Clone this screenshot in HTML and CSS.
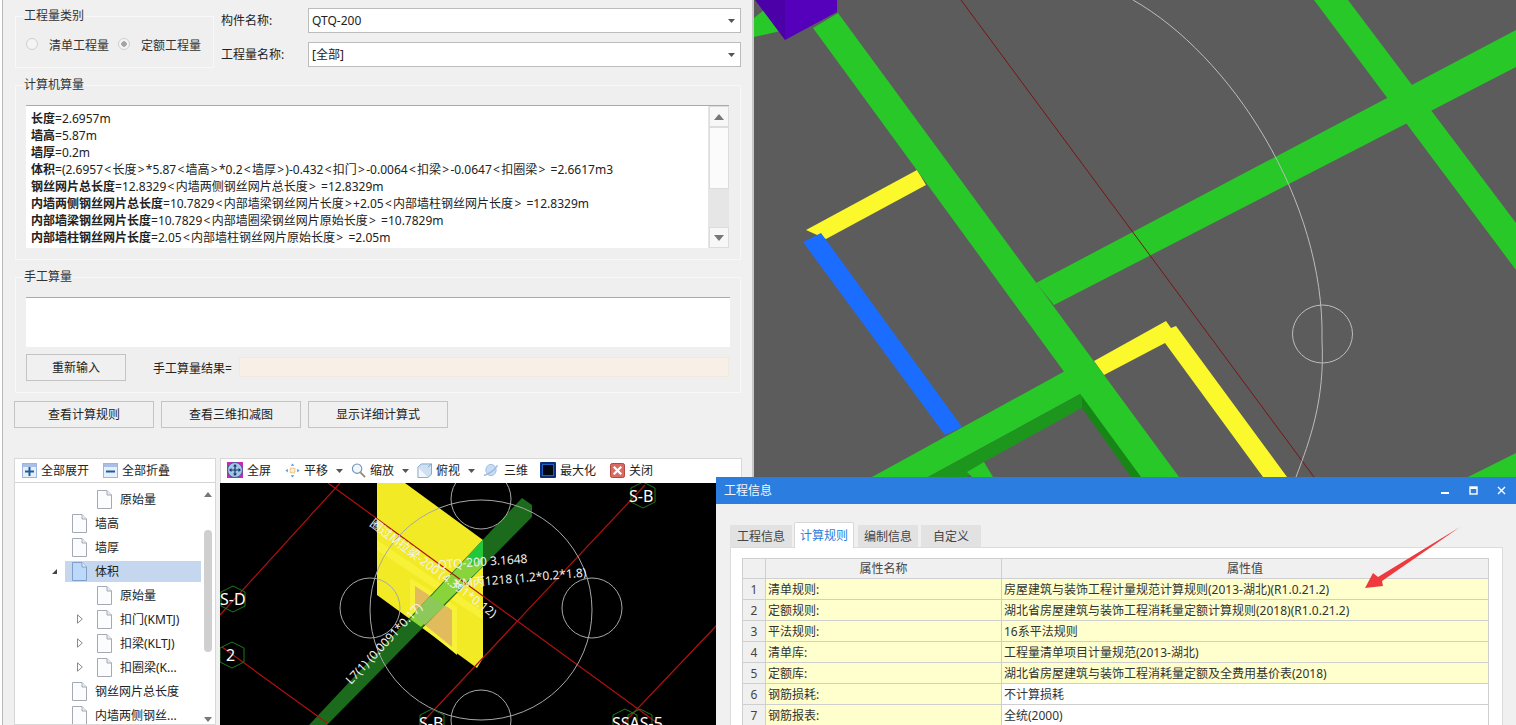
FILE: index.html
```html
<!DOCTYPE html>
<html lang="zh">
<head>
<meta charset="utf-8">
<title>工程量</title>
<link rel="stylesheet" href="styles.css">
</head>
<body>
<svg class="defs" width="0" height="0" aria-hidden="true">
  <symbol id="file" viewBox="0 0 15 19">
    <path d="M.5.5h9.5l4.5 4.5v13.500h-14z" fill="#fbfcfe" stroke="#a3aab4"/>
    <path d="M10 .5v4.500h4.500" fill="#e8edf4" stroke="#a3aab4"/>
  </symbol>
  <symbol id="file-sel" viewBox="0 0 15 19">
    <path d="M.5.5h9.500l4.500 4.500v13.500h-14z" fill="#bcd8fa" stroke="#7f9fc8"/>
    <path d="M10 .5v4.500h4.500" fill="#e3effc" stroke="#7f9fc8"/>
  </symbol>
  <symbol id="caret" viewBox="0 0 7 4"><path d="M0 0h7L3.500 4z" fill="#555"/></symbol>
  <symbol id="expander" viewBox="0 0 6 10"><path d="M.5 .8L5.300 5 .5 9.200z" fill="#fff" stroke="#8a8a8a"/></symbol>
</svg>

<div class="app">
  <div class="edge"></div>

  <main class="left">
    <div class="top-row">
      <fieldset class="group type-group">
        <legend>工程量类别</legend>
        <div class="radios">
          <span class="radio"></span><span class="radio-label">清单工程量</span>
          <span class="radio checked"></span><span class="radio-label">定额工程量</span>
        </div>
      </fieldset>
      <div class="fields">
        <div class="field">
          <span class="field-label">构件名称:</span>
          <div class="combo"><span>QTQ-200</span><svg class="combo-caret"><use href="#caret"/></svg></div>
        </div>
        <div class="field">
          <span class="field-label">工程量名称:</span>
          <div class="combo"><span>[全部]</span><svg class="combo-caret"><use href="#caret"/></svg></div>
        </div>
      </div>
    </div>

    <fieldset class="group wide-group">
      <legend>计算机算量</legend>
      <div class="calc-box">
        <div class="calc-text">
          <div><b>长度</b>=2.6957m</div>
          <div><b>墙高</b>=5.87m</div>
          <div><b>墙厚</b>=0.2m</div>
          <div><b>体积</b>=(2.6957<i>&lt;</i>长度<i>&gt;</i>*5.87<i>&lt;</i>墙高<i>&gt;</i>*0.2<i>&lt;</i>墙厚<i>&gt;</i>)-0.432<i>&lt;</i>扣门<i>&gt;</i>-0.0064<i>&lt;</i>扣梁<i>&gt;</i>-0.0647<i>&lt;</i>扣圈梁<i class="end">&gt;</i>=2.6617m3</div>
          <div><b>钢丝网片总长度</b>=12.8329<i>&lt;</i>内墙两侧钢丝网片总长度<i class="end">&gt;</i>=12.8329m</div>
          <div><b>内墙两侧钢丝网片总长度</b>=10.7829<i>&lt;</i>内部墙梁钢丝网片长度<i>&gt;</i>+2.05<i>&lt;</i>内部墙柱钢丝网片长度<i class="end">&gt;</i>=12.8329m</div>
          <div><b>内部墙梁钢丝网片长度</b>=10.7829<i>&lt;</i>内部墙圈梁钢丝网片原始长度<i class="end">&gt;</i>=10.7829m</div>
          <div><b>内部墙柱钢丝网片长度</b>=2.05<i>&lt;</i>内部墙柱钢丝网片原始长度<i class="end">&gt;</i>=2.05m</div>
        </div>
        <div class="vscroll">
          <div class="vs-btn"><span class="tri-up"></span></div>
          <div class="vs-thumb"></div>
          <div class="vs-track"></div>
          <div class="vs-btn"><span class="tri-down"></span></div>
        </div>
      </div>
    </fieldset>

    <fieldset class="group wide-group manual-group">
      <legend>手工算量</legend>
      <div class="manual-input"></div>
      <div class="manual-row">
        <button class="btn reset-btn">重新输入</button>
        <span class="result-label">手工算量结果=</span>
        <div class="result-box"></div>
      </div>
    </fieldset>

    <div class="actions">
      <button class="btn action-btn">查看计算规则</button>
      <button class="btn action-btn">查看三维扣减图</button>
      <button class="btn action-btn">显示详细计算式</button>
    </div>

    <div class="bottom">
      <section class="tree">
        <div class="tree-head">
          <svg class="head-icon" viewBox="0 0 15 15"><rect x=".5" y=".5" width="14" height="14" fill="#e6eefa" stroke="#9db4dc"/><rect x="1" y="1" width="13" height="3" fill="#a9bfe6"/><path d="M7.500 4v9M3 8.500h9" stroke="#1b5e9e" stroke-width="2"/></svg>
          <span class="head-label">全部展开</span>
          <svg class="head-icon second" viewBox="0 0 15 15"><rect x=".5" y=".5" width="14" height="14" fill="#e6eefa" stroke="#9db4dc"/><rect x="1" y="1" width="13" height="3" fill="#a9bfe6"/><path d="M3 8.500h9" stroke="#1b5e9e" stroke-width="2"/></svg>
          <span class="head-label">全部折叠</span>
        </div>
        <div class="tree-body">
          <div class="tree-row lvl2"><svg class="file"><use href="#file"/></svg><span>原始量</span></div>
          <div class="tree-row lvl1"><svg class="file"><use href="#file"/></svg><span>墙高</span></div>
          <div class="tree-row lvl1"><svg class="file"><use href="#file"/></svg><span>墙厚</span></div>
          <div class="tree-row lvl1 selected"><span class="exp-open"></span><svg class="file"><use href="#file-sel"/></svg><span>体积</span></div>
          <div class="tree-row lvl2"><svg class="file"><use href="#file"/></svg><span>原始量</span></div>
          <div class="tree-row lvl2"><svg class="exp"><use href="#expander"/></svg><svg class="file"><use href="#file"/></svg><span>扣门(KMTJ)</span></div>
          <div class="tree-row lvl2"><svg class="exp"><use href="#expander"/></svg><svg class="file"><use href="#file"/></svg><span>扣梁(KLTJ)</span></div>
          <div class="tree-row lvl2"><svg class="exp"><use href="#expander"/></svg><svg class="file"><use href="#file"/></svg><span>扣圈梁(K...</span></div>
          <div class="tree-row lvl1"><svg class="file"><use href="#file"/></svg><span>钢丝网片总长度</span></div>
          <div class="tree-row lvl1"><svg class="file"><use href="#file"/></svg><span>内墙两侧钢丝...</span></div>
          <div class="tree-scroll">
            <span class="tri-up small"></span>
            <div class="tree-thumb"></div>
            <span class="tri-down small"></span>
          </div>
        </div>
      </section>

      <section class="viewer">
        <div class="toolbar">
          <span class="tool"><svg class="tool-icon wide" viewBox="0 0 16 16"><rect width="16" height="16" fill="#c828b8"/><circle cx="8" cy="8" r="7.500" fill="#a8c4e4" stroke="#3e5f92"/><path d="M8 3v10M3 8h10" stroke="#123a70" stroke-width="1.200"/><path d="M8 2l2 2.500H6zM8 14l2-2.500H6zM2 8l2.500-2v4zM14 8l-2.500-2v4z" fill="#123a70"/></svg>全屏</span>
          <span class="tool"><svg class="tool-icon" viewBox="0 0 16 16"><path d="M8 .5l2 2.500H6zM8 15.500l2-2.500H6zM.5 8l2.500-2v4zM15.500 8L13 6v4z" fill="#5a9ad6"/><rect x="5.500" y="5.500" width="5" height="5" fill="#fbeed2" stroke="#e0a850" stroke-dasharray="1.500 1"/></svg>平移<svg class="tool-caret"><use href="#caret"/></svg></span>
          <span class="tool"><svg class="tool-icon" viewBox="0 0 16 16"><circle cx="6.500" cy="6" r="5" fill="#f0f6fc" stroke="#6f93b8" stroke-width="1.200"/><path d="M10 10l5 5" stroke="#9a8a6a" stroke-width="2"/></svg>缩放<svg class="tool-caret"><use href="#caret"/></svg></span>
          <span class="tool"><svg class="tool-icon" viewBox="0 0 16 16"><path d="M1 4.500h10.500v11H1z" fill="#f2f7fc" stroke="#7aa4cc"/><path d="M1 4.500L4.500 1H15.500v11l-4 3.500M11.500 4.500L15.500 1" fill="#cfe0f2" stroke="#7aa4cc"/></svg>俯视<svg class="tool-caret"><use href="#caret"/></svg></span>
          <span class="tool tool-3d"><svg class="tool-icon" viewBox="0 0 16 16"><ellipse cx="8.500" cy="7.500" rx="5.500" ry="6" fill="#c8dcf4" stroke="#9cbce0"/><path d="M1 13C5 13 12 8 15.500 2.500" fill="none" stroke="#9cbce0" stroke-width="1.600"/></svg>三维</span>
          <span class="tool"><svg class="tool-icon wide" viewBox="0 0 16 16"><rect width="16" height="16" rx="1" fill="#0a2f7c"/><rect x="2.500" y="2.500" width="11" height="11" fill="#020812" stroke="#1f62c4"/></svg>最大化</span>
          <span class="tool"><svg class="tool-icon" viewBox="0 0 16 16"><rect x=".5" y=".5" width="15" height="15" rx="2" fill="#dc6a60" stroke="#a84038"/><path d="M4 4l8 8M12 4l-8 8" stroke="#fff" stroke-width="2.400"/></svg>关闭</span>
        </div>
        <svg class="scene" viewBox="220 483 522 242">
          <polygon class="wall" points="377,483 405,483 483,540 483,658 477,668 377,595"/>
          <polygon class="wall-band" points="377,540 483,612 483,620 377,550"/>
          <polygon class="wall-band" points="410,578 457,607 457,655 410,617"/>
          <polygon class="door" points="415,586 452,610 452,647 415,617"/>
          <polygon class="beam" points="522,498 532,505 532,517 327,725 309,725"/>
          <polygon class="beam-bright" points="483,540 483,566 421,627 410,619"/>
          <polygon class="beam-door" points="415,612 430,596 445,606 425,625 415,617"/>
          <polygon class="beam-top" points="483,540 483,556 472,566 468,556"/>
          <g class="axis">
            <path d="M220 615L340 483M328 483L660 725M222 647L327 723M645 485L420 725M717 625L622 725"/>
          </g>
          <g class="rings">
            <ellipse cx="481" cy="610" rx="111" ry="110"/>
            <circle cx="481" cy="499" r="30"/>
            <circle cx="370" cy="608" r="30"/>
            <circle cx="592" cy="608" r="30"/>
            <circle cx="481" cy="720" r="30"/>
          </g>
          <g class="hexes">
            <polygon points="221,592 233,586 245,592 245,606 233,612 221,606"/>
            <polygon points="220,648 232,642 244,648 244,662 232,668 220,662"/>
            <polygon points="631,488 643,482 655,488 655,502 643,508 631,502"/>
            <polygon points="420,715 432,709 444,715 444,729 432,735 420,729"/>
            <polygon points="613,715 625,709 637,715 637,729 625,735 613,729"/>
            <polygon points="628,715 640,709 652,715 652,729 640,735 628,729"/>
          </g>
          <g class="labels">
            <text x="438" y="569" transform="rotate(-4 438 569)">QTQ-200 3.1648</text>
            <text x="455" y="588" transform="rotate(-5 455 588)">KM丙1218 (1.2*0.2*1.8)</text>
            <text x="369" y="525" transform="rotate(37 369 525)">圈过M拉梁-200 (4.391*0.12)</text>
            <text x="351" y="685" transform="rotate(-47 351 685)">L7(1) (0.0091*0.17)</text>
          </g>
          <g class="grid-labels">
            <text x="220" y="605">S-D</text>
            <text x="226" y="661">2</text>
            <text x="629" y="502">S-B</text>
            <text x="419" y="729">S-B</text>
            <text x="612" y="729">SSAS-5</text>
          </g>
        </svg>
      </section>
    </div>
  </main>

  <div class="view3d">
    <svg class="scene3d" viewBox="754 0 762 480">
      <polygon class="g" points="754,18 770,5 785,30 754,37"/>
      <polygon class="g" points="1065,371 1082,393 928,477 872,477"/>
      <polygon class="gd" points="1082,393 928,477 967,477 984,462 1082,408"/>
      <polygon class="gd2" points="1082,393 1082,408 1131,477 1143,477"/>
      <polygon class="g" points="967,472 984,462 993,477 972,477"/>
      <polygon class="g" points="1468,477 1516,453 1516,477"/>
      <polygon class="y" points="917,170 926,185 826,239 806,230"/>
      <polygon class="b" points="803,242 821,233 962,427 945,435"/>
      <polygon class="y" points="1094,361 1166,321 1171,328 1176,326 1287,477 1263,477 1165,343 1104,375"/>
      <polygon class="g" points="813,28 838,13 1179,477 1141,477"/>
      <polygon class="g" points="1036,283 1516,30 1516,67 1054,305"/>
      <polygon class="g" points="1314,0 1348,0 1516,223 1516,270"/>
      <polygon class="p1" points="755,0 785,0 785,40"/>
      <polygon class="p2" points="785,0 837,0 837,12 785,40"/>
      <path class="dark-line" d="M961 0L1314 477"/>
      <path class="arc" d="M1133 0C1230 55 1325 200 1322 340C1325 400 1310 440 1296 477"/>
      <ellipse class="arc" cx="1322.500" cy="334" rx="30" ry="29"/>
    </svg>
  </div>

  <section class="dialog">
    <header class="dialog-title">
      <span class="dialog-name">工程信息</span>
      <span class="win-btns">
        <svg viewBox="0 0 9 9"><rect x="0" y="6" width="8" height="2" fill="#fff"/></svg>
        <svg viewBox="0 0 9 9"><rect x="1" y="1" width="7" height="7" fill="none" stroke="#fff" stroke-width="1.400"/><rect x="1" y="1" width="7" height="2" fill="#fff"/></svg>
        <svg viewBox="0 0 9 9"><path d="M1 1l7 7M8 1L1 8" stroke="#fff" stroke-width="1.400"/></svg>
      </span>
    </header>
    <div class="dialog-body">
      <div class="tabs">
        <span class="tab">工程信息</span>
        <span class="tab active">计算规则</span>
        <span class="tab">编制信息</span>
        <span class="tab">自定义</span>
      </div>
      <div class="tab-panel">
        <table class="props">
          <thead>
            <tr><th class="num"></th><th class="name">属性名称</th><th>属性值</th></tr>
          </thead>
          <tbody>
            <tr class="hl"><td class="num">1</td><td class="name">清单规则:</td><td>房屋建筑与装饰工程计量规范计算规则(2013-湖北)(R1.0.21.2)</td></tr>
            <tr class="hl"><td class="num">2</td><td class="name">定额规则:</td><td>湖北省房屋建筑与装饰工程消耗量定额计算规则(2018)(R1.0.21.2)</td></tr>
            <tr class="hl"><td class="num">3</td><td class="name">平法规则:</td><td>16系平法规则</td></tr>
            <tr class="hl"><td class="num">4</td><td class="name">清单库:</td><td>工程量清单项目计量规范(2013-湖北)</td></tr>
            <tr class="hl"><td class="num">5</td><td class="name">定额库:</td><td>湖北省房屋建筑与装饰工程消耗量定额及全费用基价表(2018)</td></tr>
            <tr><td class="num">6</td><td class="name">钢筋损耗:</td><td>不计算损耗</td></tr>
            <tr><td class="num">7</td><td class="name">钢筋报表:</td><td>全统(2000)</td></tr>
          </tbody>
        </table>
      </div>
    </div>
    <svg class="red-arrow" viewBox="0 0 98 64"><polygon points="1,62 9,47 14,51 96,1 18,55 19,60"/></svg>
  </section>
</div>
</body>
</html>
```
FILE: styles.css
```css
* { box-sizing: border-box; }
html, body { margin: 0; height: 100%; overflow: hidden; }
body {
  font-family: "Noto Sans", "Noto Sans CJK SC", sans-serif;
  font-size: 12px;
  line-height: 17px;
  color: #222;
  background: #f0f0f0;
}
.defs { position: absolute; }
.app { display: flex; width: 1516px; height: 725px; position: relative; overflow: hidden; }
.edge { width: 3px; flex: none; background: #fff; border-right: 1px solid #b8b8b8; }

/* Left panel */
.left { width: 748px; flex: none; padding: 8px 0 0 12px; background: #f0f0f0; }
.group {
  margin: 0;
  padding: 0 10px 11px;
  border: 1px solid #f8f8f8;
  min-width: 0;
}
.group legend { margin-left: -2px; padding: 0; line-height: 16px; color: #333; }
.top-row { display: flex; height: 60px; }
.type-group { width: 199px; height: 60px; padding: 0; background: #efefef; }
.type-group legend { margin-left: 8px; }
.radios { display: flex; align-items: center; padding: 13px 0 0 10px; }
.radio { width: 12px; height: 12px; margin-top: -4px; border-radius: 50%; border: 1px solid #d0d0d0; background: #f4f4f4; flex: none; }
.radio.checked { background: radial-gradient(circle, #a4a4a4 0 2.500px, #f4f4f4 3px); }
.radio-label { margin: 0 9px 0 11px; color: #333; white-space: nowrap; }
.radio-label:last-child { margin-right: 0; }
.fields { display: flex; flex-direction: column; gap: 9px; margin-left: 7px; }
.field { display: flex; align-items: center; height: 25px; }
.field-label { width: 87px; flex: none; }
.combo {
  width: 433px; height: 25px;
  display: flex; align-items: center; justify-content: space-between;
  padding: 0 5px 0 3px;
  background: #fff;
  border: 1px solid #bcbcbc;
}
.combo-caret { width: 7px; height: 4px; }

.wide-group { width: 726px; margin-top: 9px; background: #efefef; }
.calc-box { display: flex; width: 703px; height: 143px; margin-top: 12px; background: #fff; border-top: 1px solid #aaa; }
.calc-text { flex: 1; padding: 4px 0 0 5px; white-space: nowrap; overflow: hidden; }
.calc-text div { height: 17px; }
.calc-text i { font-style: normal; padding: 0 1.250px; }
.calc-text i.end { padding-right: 5.250px; }
.vscroll { width: 21px; flex: none; display: flex; flex-direction: column; border-left: 1px solid #e6e6e6; }
.vs-btn { height: 21px; background: #f7f7f7; border: 1px solid #dcdcdc; display: flex; align-items: center; justify-content: center; }
.vs-thumb { height: 62px; background: #fbfbfb; border: 1px solid #dcdcdc; }
.vs-track { flex: 1; background: #e6e6e6; }
.tri-up, .tri-down { display: block; width: 0; height: 0; border-left: 5px solid transparent; border-right: 5px solid transparent; }
.tri-up { border-bottom: 6px solid #777; }
.tri-down { border-top: 6px solid #777; }
.tri-up.small, .tri-down.small { border-left-width: 4px; border-right-width: 4px; }
.tri-up.small { border-bottom-width: 5px; }
.tri-down.small { border-top-width: 5px; }

.manual-group { height: 124px; }
.manual-input { width: 704px; height: 50px; margin-top: 12px; background: #fff; border-top: 1px solid #aaa; }
.manual-row { display: flex; align-items: flex-start; margin-top: 7px; }
.btn {
  font: inherit; color: #222; padding: 0;
  background: #f0f0f0;
  border: 1px solid #c4c4c4;
}
.reset-btn { width: 100px; height: 27px; }
.result-label { margin: 6px 7px 0 27px; white-space: nowrap; }
.result-box { width: 490px; height: 20px; margin-top: 3px; background: #f8efe6; border: 1px solid #efe9e2; }

.actions { display: flex; gap: 7px; margin: 8px 0 0 -1px; }
.action-btn { width: 140px; height: 27px; }

.bottom { display: flex; gap: 4px; margin: 30px 0 0 -1px; height: 267px; }
.tree { width: 202px; flex: none; display: flex; flex-direction: column; background: #fff; border: 1px solid #d8d8d8; }
.tree-head { height: 24px; flex: none; display: flex; align-items: center; padding-left: 7px; border-bottom: 1px solid #d4d4d4; }
.head-icon { width: 15px; height: 15px; flex: none; }
.head-icon.second { margin-left: 14px; }
.head-label { margin-left: 4px; white-space: nowrap; }
.tree-body { position: relative; flex: 1; overflow: hidden; padding-top: 4px; }
.tree-row { height: 24px; display: flex; align-items: center; position: relative; white-space: nowrap; }
.file { width: 15px; height: 19px; flex: none; }
.tree-row span:last-child { margin-left: 8px; }
.lvl1 { padding-left: 57px; }
.lvl2 { padding-left: 82px; }
.selected::before {
  content: ""; position: absolute; left: 50px; right: 14px; top: 2px; height: 21px;
  background: #c5d7ef; z-index: 0;
}
.selected > * { position: relative; z-index: 1; }
.exp { position: absolute; left: 62px; width: 6px; height: 10px; }
.tree-row .exp-open { position: absolute; left: 37px; width: 0; height: 0; margin: 0; border-left: 5px solid transparent; border-bottom: 5px solid #444; }
.tree-scroll {
  position: absolute; right: 2px; top: 0; bottom: 0; width: 10px;
  display: flex; flex-direction: column; align-items: center; justify-content: space-between;
  padding: 9px 0 0;
}
.tree-thumb { position: absolute; left: 1px; top: 47px; width: 8px; height: 122px; border-radius: 4px; background: #cfcfcf; }
.tree-scroll .tri-down { margin-bottom: 2px; }

.viewer { width: 522px; flex: none; display: flex; flex-direction: column; }
.toolbar { height: 25px; flex: none; display: flex; align-items: center; padding: 0 0 2px 6px; background: #fff; border: 1px solid #d8d8d8; border-bottom: 0; gap: 14px; white-space: nowrap; }
.tool { display: flex; align-items: center; }
.tool-icon { width: 15px; height: 15px; margin-right: 4px; flex: none; }
.tool-icon.wide { width: 16px; height: 16px; }
.tool-caret { width: 7px; height: 4px; margin: 1px -6px 0 8px; }
.tool-3d { margin-right: -2px; }
.tool-3d .tool-icon { margin-right: 6px; }
.scene { display: block; width: 522px; height: 242px; background: #000; }
.wall { fill: #f2ea24; }
.wall-band { fill: #f7f238; }
.door { fill: #e2bb5c; }
.beam { fill: #1c6a1c; }
.beam-bright { fill: #88d43a; }
.beam-door { fill: #8cc85a; }
.beam-top { fill: #22c83c; }
.axis path { fill: none; stroke: #b01010; stroke-width: 1.200; }
.rings { fill: none; stroke: #a8a8a8; stroke-width: 1; }
.hexes { fill: none; stroke: #1c7a1c; }
.labels { fill: #f2f2f2; font-size: 12px; }
.grid-labels { fill: #fff; font-size: 16px; }

/* 3D view */
.view3d { flex: 1; min-width: 0; border-left: 2px solid #c8c8c8; margin-left: 1px; background: #5c5c5c; }
.scene3d { display: block; width: 762px; height: 480px; }
.g { fill: #28c828; }
.gd { fill: #1d961d; }
.gd2 { fill: #178617; }
.y { fill: #fbf82c; }
.b { fill: #1b6dff; }
.p1 { fill: #4b00a8; }
.p2 { fill: #5500bb; }
.dark-line { stroke: #7a1414; fill: none; }
.arc { stroke: #bcbcbc; fill: none; }

/* Floating dialog */
.dialog { position: absolute; left: 716px; top: 477px; width: 800px; height: 248px; background: #f0f0f0; }
.dialog-title { height: 27px; display: flex; align-items: center; justify-content: space-between; padding: 0 10px 0 8px; background: #2b7de0; color: #fff; }
.dialog-name { color: #f2f7fd; }
.win-btns { display: flex; gap: 19px; }
.win-btns svg { width: 9px; height: 9px; }
.dialog-body { padding: 18px 13px 0 14px; }
.tabs { display: flex; height: 25px; align-items: flex-end; gap: 3px; }
.tab { width: 60px; height: 22px; display: flex; align-items: center; justify-content: center; background: #e2e2e2; color: #444; }
.tab:first-child { width: 62px; }
.tab.active { height: 26px; margin: 0 1px -1px -1px; position: relative; background: #fff; color: #2b7de0; border: 1px solid #d8d8d8; border-bottom: 0; border-radius: 2px 2px 0 0; }
.tab-panel { height: 179px; background: #fff; padding: 10px 13px 0 11px; border: 1px solid #dcdcdc; border-bottom: 0; }
.props { width: 747px; border-collapse: collapse; table-layout: fixed; }
.props th { height: 20px; padding: 0; font-weight: 400; text-align: center; background: #f0f0f0; border: 1px solid #cfcfcf; color: #444; }
.props td { height: 21px; padding: 0 2px; background: #fff; border: 1px solid #cfcfcf; white-space: nowrap; color: #333; }
.props .num { width: 23px; padding: 0; text-align: center; background: #f0f0f0; color: #444; }
.props .name { width: 236px; }
.props td.name { background: #ffffcd; }
.props .hl td:not(.num) { background: #ffffcd; }
.red-arrow { position: absolute; left: 648px; top: 49px; width: 98px; height: 64px; fill: #ee3a3f; }
```
